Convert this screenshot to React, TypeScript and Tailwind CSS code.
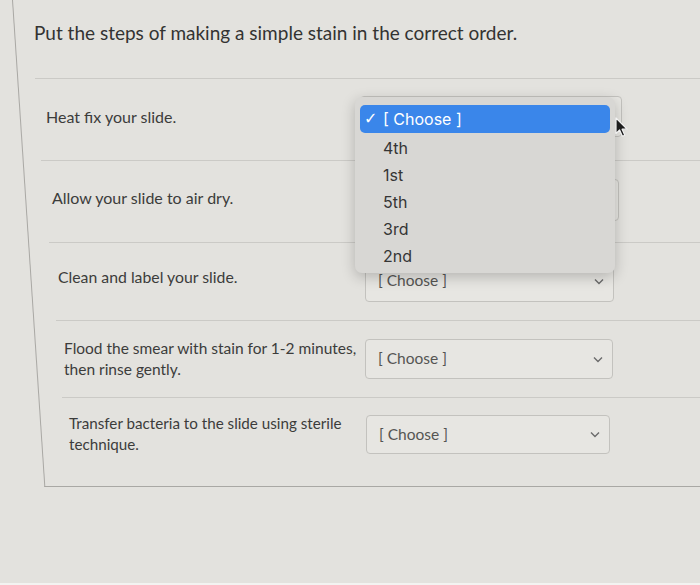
import { FC } from 'react';

type MatchRow = {
  label: string;
  rowClass: string;
  labelClass: string;
  selectClass: string;
  sepClass?: string;
};

// each row sits a little further right: the page is photographed at an angle
const rows: MatchRow[] = [
  {
    label: 'Heat fix your slide.',
    rowClass: 'items-center pt-[17px] pb-[23px]',
    labelClass: 'w-[347px] pl-[33px] text-[16px]',
    selectClass: 'w-[262px] h-[41px]',
    sepClass: 'ml-[28px]',
  },
  {
    label: 'Allow your slide to air dry.',
    rowClass: 'items-center pt-[18px] pb-[21px]',
    labelClass: 'w-[349px] pl-[39px] text-[16px] mb-[6px]',
    selectClass: 'w-[257px] h-[42px]',
    sepClass: 'ml-[36px]',
  },
  {
    label: 'Clean and label your slide.',
    rowClass: 'items-center pt-[17px] pb-[18px]',
    labelClass: 'w-[352px] pl-[45px] text-[15.8px] mb-[9px]',
    selectClass: 'w-[249px] h-[42px]',
    sepClass: 'ml-[43px]',
  },
  {
    label: 'Flood the smear with stain for 1-2 minutes, then rinse gently.',
    rowClass: 'items-center pt-[17px] pb-[17px]',
    labelClass: 'w-[352px] pl-[51px] pr-[8px] text-[15.5px]',
    selectClass: 'w-[248px] h-[40px]',
    sepClass: 'ml-[49px]',
  },
  {
    label: 'Transfer bacteria to the slide using sterile technique.',
    rowClass: 'items-start pt-[17px] pb-[31px]',
    labelClass: 'w-[353px] pl-[56px] pr-[14px] text-[15.2px] -mt-[2px]',
    selectClass: 'w-[244px] h-[39px]',
  },
];

const options = ['4th', '1st', '5th', '3rd', '2nd'];

const Chevron: FC = () => (
  <svg width="10" height="7" viewBox="0 0 10 7" fill="none">
    <path d="M1 1.5 L5 5.5 L9 1.5" stroke="#6b6b6b" strokeWidth="1.4" />
  </svg>
);

const SelectBox: FC<{ className: string }> = ({ className }) => (
  <div
    className={`${className} flex shrink-0 items-center justify-between rounded-[4px] border border-[#c3c2be] bg-[#e7e6e2] pl-[12px] pr-[9px]`}
  >
    <span className="text-[15.5px] text-[#555553]">[ Choose ]</span>
    <Chevron />
  </div>
);

const Cursor: FC = () => (
  <svg width="14" height="21" viewBox="0 0 14 21">
    <path
      d="M1 1 L1 16.5 L4.6 13 L7.4 19.2 L9.8 18.2 L7.1 12.2 L12 12.2 Z"
      fill="#1d1d1d"
      stroke="#f2f2f2"
      strokeWidth="1.2"
      strokeLinejoin="round"
    />
  </svg>
);

export default function App() {
  return (
    <div
      className="relative flex h-[585px] w-[700px] flex-col overflow-hidden bg-[#e3e2de] text-[#3c3c3b]"
      style={{ fontFamily: 'Lato, "Open Sans", sans-serif' }}
    >
      <div className="ml-[12px] origin-top-left skew-x-[3.8deg] border-b border-l border-[#a9a8a4]">
        <div className="origin-top-left -skew-x-[3.8deg]">
          <h1 className="pl-[21px] pt-[19px] text-[19px] font-normal leading-[28px] text-[#333332]">
            Put the steps of making a simple stain in the correct order.
          </h1>
          <div className="ml-[22px] mt-[31px] border-t border-[#cbcac6]" />
          {rows.map((row, i) => (
            <div key={i}>
              <div className={`flex ${row.rowClass}`}>
                <div className={`${row.labelClass} shrink-0 leading-[21px]`}>
                  {row.label}
                </div>
                <SelectBox className={row.selectClass} />
              </div>
              {row.sepClass && (
                <div className={`${row.sepClass} border-t border-[#cbcac6]`} />
              )}
            </div>
          ))}
        </div>
      </div>
      <div className="flex-1" />
      <div className="h-[2px] bg-[#f3f3f1]" />

      {/* open dropdown of the first select */}
      <div
        className="absolute left-[355px] top-[97px] w-[260px] rounded-[7px] bg-[#d8d7d4] px-[5px] pb-[3px] pt-[8px] text-[16px] text-[#353535] shadow-[0_4px_14px_rgba(0,0,0,0.22)]"
        style={{ fontFamily: 'Inter, "Liberation Sans", sans-serif' }}
      >
        <div className="flex h-[28px] items-center rounded-[5px] bg-[#3a86ea] pl-[4px] text-white">
          <span
            className="w-[19px] text-[16px] font-bold"
            style={{ fontFamily: '"DejaVu Sans", sans-serif' }}
          >
            ✓
          </span>
          <span>[ Choose ]</span>
        </div>
        <div className="mt-[2px]">
          {options.map((o) => (
            <div key={o} className="h-[27px] pl-[23px] leading-[27px]">
              {o}
            </div>
          ))}
        </div>
      </div>

      <div className="absolute left-[615px] top-[117px]">
        <Cursor />
      </div>
    </div>
  );
}
